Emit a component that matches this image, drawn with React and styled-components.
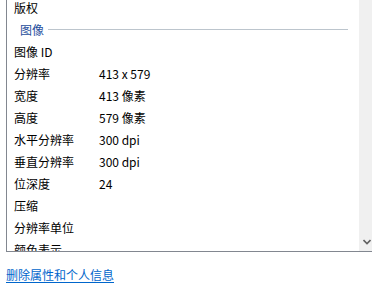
import React from 'react'
import styled, { createGlobalStyle } from 'styled-components'

const Global = createGlobalStyle`
  html, body {
    margin: 0;
    padding: 0;
    background: #ffffff;
    overflow: hidden;
  }
  body {
    font-family: "Noto Sans CJK SC", "Noto Sans", sans-serif;
    font-size: 12px;
    color: #000;
  }
`

const Page = styled.div`
  width: 372px;
  height: 293px;
  padding-left: 6px;
  box-sizing: border-box;
  overflow: hidden;
`

const ListBox = styled.div`
  width: 370px;
  height: 252px;
  box-sizing: border-box;
  border-left: 1px solid #828790;
  border-bottom: 1px solid #828790;
  display: flex;
  overflow: hidden;
`

const Rows = styled.div`
  flex: 1;
  min-width: 0;
  margin-top: -4px;
  padding-left: 7px;
  padding-right: 11px;
`

const Row = styled.div`
  height: 22px;
  display: flex;
  align-items: center;
  white-space: nowrap;
`

const Label = styled.span`
  width: 85px;
  flex-shrink: 0;
`

const Value = styled.span``

const GroupRow = styled(Row)`
  padding-left: 6px;
  gap: 4px;
  color: #1f4e9c;
`

const GroupLine = styled.div`
  flex: 1;
  height: 1px;
  background: #bcc5cd;
`

const Scrollbar = styled.div`
  width: 17px;
  flex-shrink: 0;
  background: #f0f0f0;
  display: flex;
  flex-direction: column;
  justify-content: flex-end;
  align-items: flex-start;
  padding-left: 4px;
  padding-bottom: 6px;
  box-sizing: border-box;
`

const Link = styled.a`
  display: inline-block;
  margin-top: 14px;
  color: #0066cc;
  text-decoration: underline;
  text-underline-offset: 2px;
  cursor: pointer;
`

const rows = [
  ['图像 ID', ''],
  ['分辨率', '413 x 579'],
  ['宽度', '413 像素'],
  ['高度', '579 像素'],
  ['水平分辨率', '300 dpi'],
  ['垂直分辨率', '300 dpi'],
  ['位深度', '24'],
  ['压缩', ''],
  ['分辨率单位', ''],
  ['颜色表示', ''],
]

const App = () => {
  return (
    <Page>
      <Global />
      <ListBox>
        <Rows>
          <Row><Label>版权</Label></Row>
          <GroupRow>
            <span>图像</span>
            <GroupLine />
          </GroupRow>
          {rows.map(([k, v]) => (
            <Row key={k}>
              <Label>{k}</Label>
              <Value>{v}</Value>
            </Row>
          ))}
        </Rows>
        <Scrollbar>
          <svg width="8" height="6" viewBox="0 0 8 6">
            <path d="M0.5 1 L4 4.5 L7.5 1" fill="none" stroke="#606060" strokeWidth="1.6" />
          </svg>
        </Scrollbar>
      </ListBox>
      <Link>删除属性和个人信息</Link>
    </Page>
  )
}

export default App
